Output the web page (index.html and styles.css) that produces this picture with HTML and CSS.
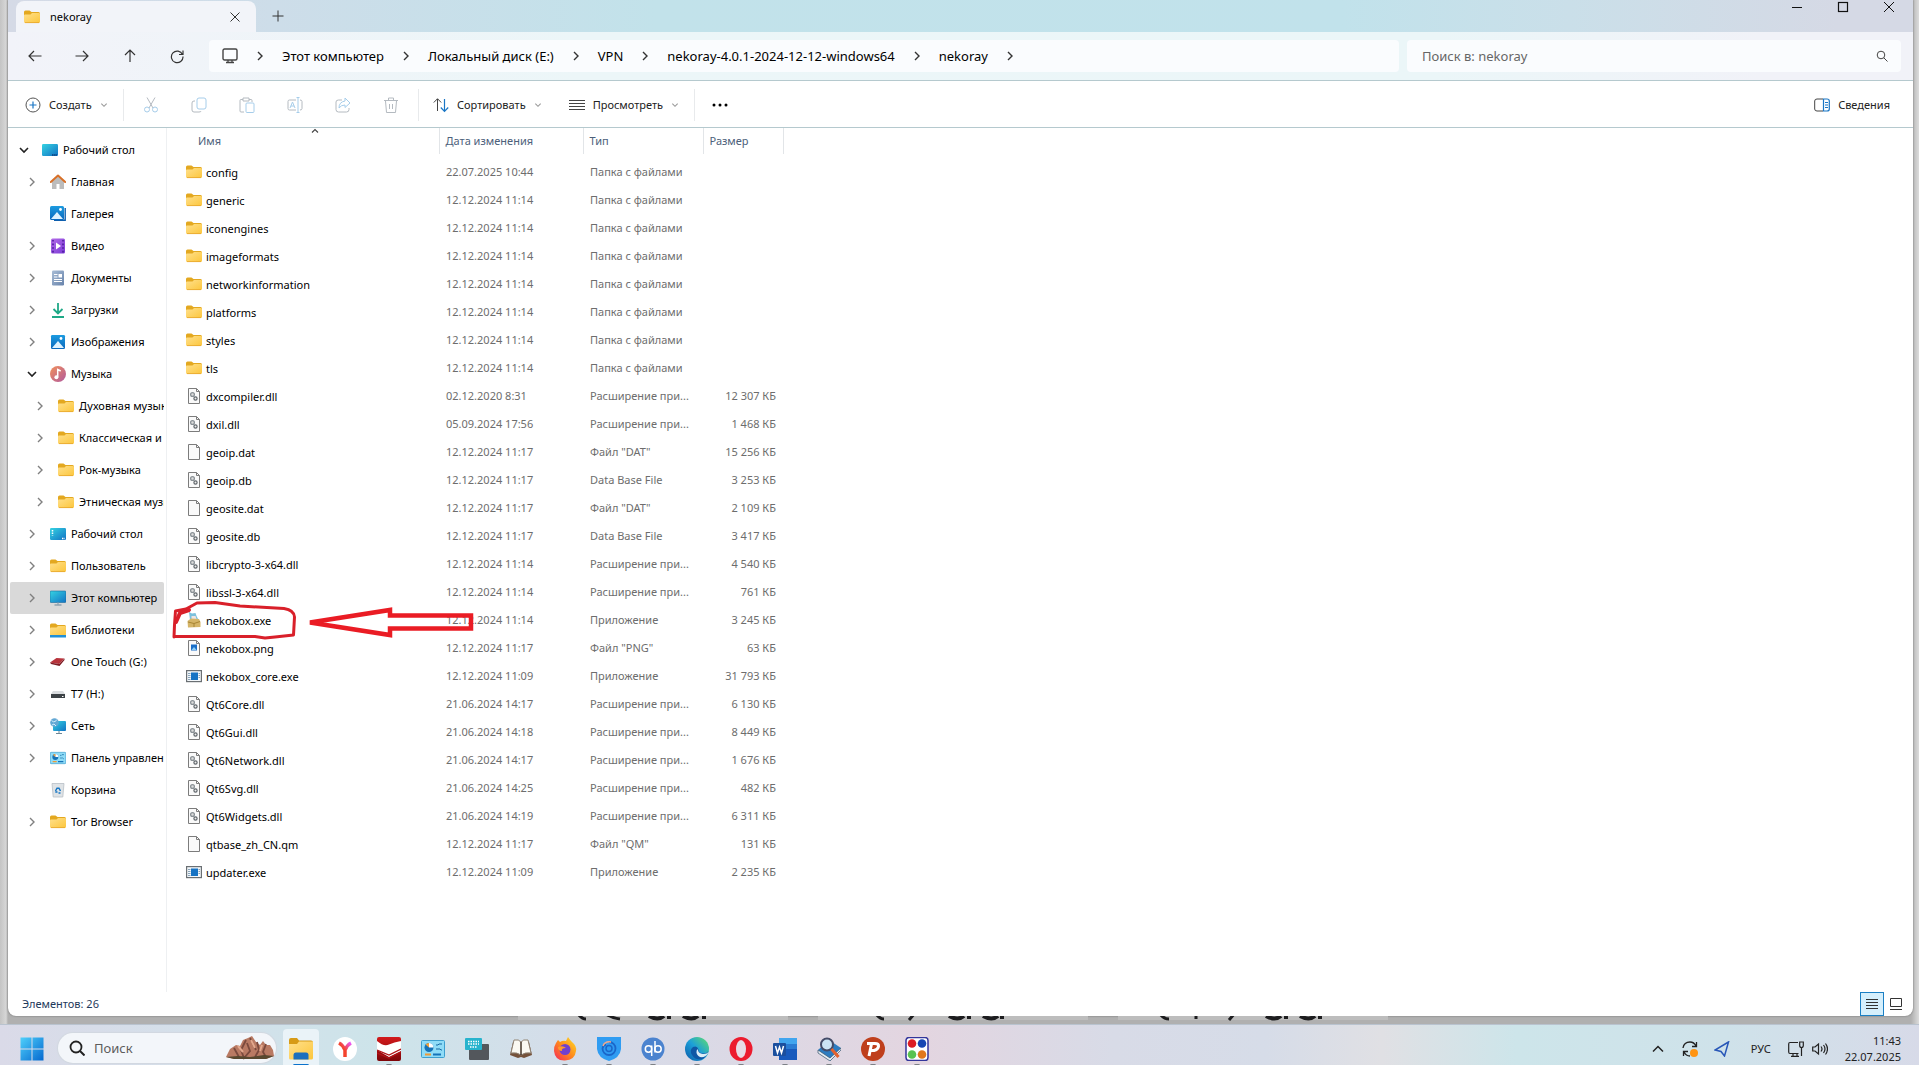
FILE: index.html
```html
<!DOCTYPE html>
<html lang="ru">
<head>
<meta charset="utf-8">
<title>nekoray</title>
<link rel="stylesheet" href="styles.css">
</head>
<body>
<svg class="sprite" aria-hidden="true">
  <defs>
    <linearGradient id="gFolder" x1="0" y1="0" x2="1" y2="1"><stop offset="0" stop-color="#ffe08c"/><stop offset="1" stop-color="#fcc63c"/></linearGradient>
    <linearGradient id="gDesk" x1="0" y1="0" x2="1" y2="1"><stop offset="0" stop-color="#35d3e2"/><stop offset="1" stop-color="#1273c4"/></linearGradient>
    <linearGradient id="gBlue" x1="0" y1="0" x2="0" y2="1"><stop offset="0" stop-color="#1c9be0"/><stop offset="1" stop-color="#0a68bd"/></linearGradient>
    <linearGradient id="gViolet" x1="0" y1="0" x2="1" y2="1"><stop offset="0" stop-color="#b36be8"/><stop offset="1" stop-color="#7a3ad6"/></linearGradient>
    <linearGradient id="gDoc" x1="0" y1="0" x2="1" y2="1"><stop offset="0" stop-color="#a9bdd6"/><stop offset="1" stop-color="#6783ab"/></linearGradient>
    <linearGradient id="gMusic" x1="0" y1="0" x2="1" y2="1"><stop offset="0" stop-color="#f2905a"/><stop offset="1" stop-color="#b15a9e"/></linearGradient>
    <linearGradient id="gWin" x1="0" y1="0" x2="1" y2="1"><stop offset="0" stop-color="#4fd0fb"/><stop offset="1" stop-color="#0568cf"/></linearGradient>
    <linearGradient id="gFox" x1="1" y1="0" x2="0" y2="1"><stop offset="0" stop-color="#ffe226"/><stop offset=".5" stop-color="#ff8a1c"/><stop offset="1" stop-color="#f5245c"/></linearGradient>
    <linearGradient id="gEdge" x1="0" y1="1" x2="1" y2="0"><stop offset="0" stop-color="#0b59a8"/><stop offset=".5" stop-color="#1c9fd8"/><stop offset="1" stop-color="#63e06a"/></linearGradient>
    <linearGradient id="gRed" x1="0" y1="0" x2="0" y2="1"><stop offset="0" stop-color="#d31a1c"/><stop offset="1" stop-color="#7d0509"/></linearGradient>
    <linearGradient id="gYa" x1="0" y1="1" x2="1" y2="0"><stop offset=".5" stop-color="#f4442e"/><stop offset="1" stop-color="#e95bff"/></linearGradient>
  </defs>
  <symbol id="folder" viewBox="0 0 16 16"><path d="M0 3q0-1.500 1.500-1.500h4l2 1.500h7Q16 3 16 4.500V8H0z" fill="#e3a820"/><path d="M0 6.500Q0 5.500 1 5.500h5.500L8 4h7q1 0 1 1v7.500q0 1.500-1.500 1.500h-13Q0 14 0 12.500z" fill="url(#gFolder)"/><path d="M1 13.600h14" stroke="#e6a52b" stroke-width=".8"/></symbol>
  <symbol id="desktop" viewBox="0 0 16 16"><rect y="2" width="16" height="12" rx="1.200" fill="url(#gDesk)"/><path d="M10 13h5" stroke="#0b3f7c" stroke-width="1.600" stroke-dasharray="1.500 .6"/></symbol>
  <symbol id="desktop2" viewBox="0 0 16 16"><rect y="2" width="16" height="12" rx="1.200" fill="url(#gDesk)"/><path d="M2.500 4v5.500M12 12.500h3" stroke="#fff" stroke-width="1.500" stroke-dasharray="1.500 1"/></symbol>
  <symbol id="home" viewBox="0 0 16 16"><path d="M2 7l6-5 6 5v8h-4.500v-5h-3v5H2z" fill="#bcbcbc"/><path d="M.8 8L8 1.500 15.200 8" fill="none" stroke="#d87028" stroke-width="2" stroke-linecap="round" stroke-linejoin="round"/></symbol>
  <symbol id="gallery" viewBox="0 0 16 16"><path d="M15.200 2v12.200H4" stroke="#0d5fae" stroke-width="1.400" fill="none"/><rect width="14" height="14" rx="1.500" fill="url(#gBlue)"/><path d="M1 13l6-7 6 7z" fill="#dff3ff"/><circle cx="10.500" cy="3.500" r="1.400" fill="#fff"/></symbol>
  <symbol id="video" viewBox="0 0 16 16"><rect x="1" y=".5" width="14" height="15" rx="1.500" fill="url(#gViolet)"/><path d="M3 2v13M13 2v13" stroke="#4b1c9c" stroke-width="1.600" stroke-dasharray="1.600 2"/><path d="M6 4.500l5 3.500-5 3.500z" fill="#fff"/></symbol>
  <symbol id="docs" viewBox="0 0 16 16"><rect x="2" y=".5" width="12" height="15" rx="1.200" fill="url(#gDoc)"/><path d="M4 4.500h3.500M4 7h3.500M4 9.500h8M4 11.500h8" stroke="#fff"/><rect x="8.500" y="4" width="3.500" height="3.500" fill="#fff"/></symbol>
  <symbol id="downloads" viewBox="0 0 16 16"><path d="M8 1v10M3.500 7L8 11.500 12.500 7M2 15h12" stroke="#1fa987" stroke-width="1.800" fill="none"/></symbol>
  <symbol id="pictures" viewBox="0 0 16 16"><rect x="1" y="1" width="14" height="14" rx="1.200" fill="url(#gBlue)"/><path d="M2 14l6-7 6 7z" fill="#dff3ff"/><circle cx="11" cy="4.500" r="1.400" fill="#fff"/></symbol>
  <symbol id="music" viewBox="0 0 16 16"><circle cx="8" cy="8" r="8" fill="url(#gMusic)"/><path d="M7.700 11V3.500l3 1.500" stroke="#fff" stroke-width="1.500" fill="none"/><circle cx="6.400" cy="11.200" r="2" fill="#fff"/></symbol>
  <symbol id="pc" viewBox="0 0 16 16"><rect y="1" width="16" height="11.500" rx="1" fill="url(#gDesk)" stroke="#1b6a9c" stroke-width=".6"/><path d="M8 12.500v2M4.500 15h7" stroke="#8fa3b0" stroke-width="1.300"/></symbol>
  <symbol id="libs" viewBox="0 0 16 16"><use href="#folder"/><rect y="13" width="16" height="2.500" fill="#2090d8"/></symbol>
  <symbol id="onetouch" viewBox="0 0 16 16"><path d="M0 8.500L6.500 4l8 .5L9 10z" fill="#b8343c"/><path d="M0 8.500L9 10l5.500-5.500v1.500L9.500 12 1 10z" fill="#7d1c24"/></symbol>
  <symbol id="t7" viewBox="0 0 16 16"><path d="M3 5h10l2 3H1z" fill="#d9dcdf"/><rect x="1" y="8" width="14" height="4" fill="#3c4246"/><path d="M12 10.500h1.500" stroke="#fff"/></symbol>
  <symbol id="net" viewBox="0 0 16 16"><rect x="3" y="3" width="13" height="10" rx="1" fill="url(#gDesk)"/><path d="M9 13v2.500M6 15.500h6" stroke="#6c8796"/><circle cx="4.500" cy="4.500" r="4.300" fill="#64a8d4"/><path d="M1.500 2.500q2 2 3.500 1t2-2M2 7l2-1 2 2" stroke="#d3eefb" fill="none"/></symbol>
  <symbol id="control" viewBox="0 0 24 18"><rect x=".5" y=".5" width="23" height="17" rx="1" fill="#8fdcf7" stroke="#3d9fcf"/><circle cx="8" cy="7.500" r="4.500" fill="#1573b8"/><path d="M8 7.500V3a4.500 4.500 0 0 1 4.500 4.500z" fill="#fff"/><path d="M8 7.500L4.500 4.600A4.500 4.500 0 0 1 8 3z" fill="#f2a23a"/><path d="M15 5h2l1-1h3M15 9h4l1 1h1" stroke="#146aa5" fill="none"/><path d="M4 14.500h6" stroke="#ee9b36" stroke-width="2"/><path d="M12 14.500h8" stroke="#1573b8" stroke-width="2"/></symbol>
  <symbol id="bin" viewBox="0 0 16 16"><path d="M2 1.500h12L12.800 15H3.200z" fill="#dfe3e6" stroke="#b8bfc5" stroke-width=".8"/><path d="M5.500 9L7 6.200h2L10.500 9M5.300 10h2.200M8.500 11h2" stroke="#1877c4" stroke-width="1.500" fill="none"/></symbol>
  <symbol id="page" viewBox="0 0 16 16"><path d="M2.500.5h8l3 3v12h-11z" fill="#fafafa" stroke="#7c7c7c"/><path d="M10.500.5v3h3" fill="none" stroke="#7c7c7c"/></symbol>
  <symbol id="gear" viewBox="0 0 16 16"><use href="#page"/><circle cx="6.500" cy="6.500" r="1.900" fill="#ddd" stroke="#8a9196" stroke-width="1.300"/><circle cx="9.500" cy="10.500" r="1.600" fill="#eee" stroke="#60666b" stroke-width="1.200"/></symbol>
  <symbol id="png" viewBox="0 0 16 16"><use href="#page"/><rect x="5" y="4.500" width="6" height="6" fill="#1b6fc8"/><path d="M5.500 10l2.500-3 2.500 3z" fill="#8fd0f7"/></symbol>
  <symbol id="exe" viewBox="0 0 16 16"><rect x=".6" y="2.600" width="14.800" height="11" fill="#f4f8fb" stroke="#6a6f73" stroke-width="1.200"/><path d="M2 5.500h2.500M2 7.500h2.500M2 9.500h2.500M2 11.500h2.500M12.500 5.500H14M12.500 7.500H14M12.500 9.500H14" stroke="#8aa5bb"/><rect x="5" y="4.500" width="7" height="7.500" fill="#1673c4"/></symbol>
  <symbol id="neko" viewBox="0 0 16 16"><path d="M3 0l3 1.500 3.500-.5 1 3 2 4H4z" fill="#7cc0dc"/><path d="M5.500 4h4l1 3H5.500z" fill="#f0e5e0"/><path d="M1.500 9L5 6.500l8 .5 1.500 3v5L2 15.500z" fill="#d5b568"/><path d="M2 10l6 1.500 6-2M8 11.500V15" stroke="#a88534" fill="none"/></symbol>
  <symbol id="right" viewBox="0 0 8 12"><path d="M2 2l4 4-4 4" fill="none" stroke="currentColor" stroke-width="1.400"/></symbol>
  <symbol id="down" viewBox="0 0 12 8"><path d="M2 2l4 4 4-4" fill="none" stroke="currentColor" stroke-width="1.600"/></symbol>
</svg>

<main class="window">
  <header class="titlebar">
    <div class="tab"><svg class="i16"><use href="#folder"/></svg><span class="tab-name">nekoray</span><button class="plain" aria-label="Закрыть вкладку"><svg class="i12" viewBox="0 0 12 12"><path d="M1.500 1.500l9 9M10.500 1.500l-9 9" stroke="#333"/></svg></button></div>
    <button class="plain newtab" aria-label="Новая вкладка"><svg class="i12" viewBox="0 0 12 12"><path d="M6 .5v11M.5 6h11" stroke="#333"/></svg></button>
    <div class="winbuttons">
      <button class="plain" aria-label="Свернуть"><svg class="i12" viewBox="0 0 12 12"><path d="M1 6.500h10" stroke="#111"/></svg></button>
      <button class="plain" aria-label="Развернуть"><svg class="i12" viewBox="0 0 12 12"><rect x="1.500" y="1.500" width="9" height="9" fill="none" stroke="#111" stroke-width="1.200"/></svg></button>
      <button class="plain" aria-label="Закрыть"><svg class="i12" viewBox="0 0 12 12"><path d="M1 1l10 10M11 1L1 11" stroke="#111"/></svg></button>
    </div>
  </header>

  <div class="navbar">
    <div class="navbuttons">
      <button class="plain" aria-label="Назад"><svg class="i16" viewBox="0 0 16 16"><path d="M14.500 8H2M7 3L2 8l5 5"/></svg></button>
      <button class="plain" aria-label="Вперёд"><svg class="i16" viewBox="0 0 16 16"><path d="M1.500 8H14M9 3l5 5-5 5"/></svg></button>
      <button class="plain" aria-label="Вверх"><svg class="i16" viewBox="0 0 16 16"><path d="M8 14V2M3 7l5-5 5 5"/></svg></button>
      <button class="plain" aria-label="Обновить"><svg class="i16" viewBox="0 0 16 16"><path d="M13.500 6.500A5.800 5.800 0 1 0 14 8.500M14 2.500v4h-4"/></svg></button>
    </div>
    <nav class="address" aria-label="Путь">
      <svg class="i16" viewBox="0 0 16 16"><rect x="1" y="1" width="14" height="11" rx="1.500" fill="none" stroke="#444" stroke-width="1.400"/><path d="M4 14.500h8M6 12v2M10 12v2" stroke="#444" stroke-width="1.300"/></svg>
      <svg class="crumb"><use href="#right"/></svg><a href="#">Этот компьютер</a>
      <svg class="crumb"><use href="#right"/></svg><a href="#">Локальный диск (E:)</a>
      <svg class="crumb"><use href="#right"/></svg><a href="#">VPN</a>
      <svg class="crumb"><use href="#right"/></svg><a href="#">nekoray-4.0.1-2024-12-12-windows64</a>
      <svg class="crumb"><use href="#right"/></svg><a href="#">nekoray</a>
      <svg class="crumb"><use href="#right"/></svg>
    </nav>
    <div class="search"><input type="text" aria-label="Поиск" placeholder="Поиск в: nekoray"><svg class="i12" viewBox="0 0 12 12"><circle cx="5" cy="5" r="3.800" fill="none" stroke="#444"/><path d="M7.800 7.800l3.700 3.700" stroke="#444"/></svg></div>
  </div>

  <div class="toolbar">
    <button class="tool new"><svg class="i16" viewBox="0 0 16 16"><circle cx="8" cy="8" r="7" fill="none" stroke="#555"/><path d="M8 4.500v7M4.500 8h7" stroke="#1976c5" stroke-width="1.200"/></svg>Создать<svg class="drop"><use href="#down"/></svg></button>
    <div class="tools">
      <button class="plain" aria-label="Вырезать" disabled><svg class="i16" viewBox="0 0 16 16"><path d="M4 .5l6 10.500M12 .5L6 11" stroke="#b4bac0"/><circle cx="4" cy="12.500" r="2.500"/><circle cx="12" cy="12.500" r="2.500"/></svg></button>
      <button class="plain" aria-label="Копировать" disabled><svg class="i16" viewBox="0 0 16 16"><rect x="6" y="1" width="9" height="11" rx="2"/><path d="M4 4H3q-2 0-2 2v7q0 2 2 2h5q2 0 2-1" stroke="#b4bac0"/></svg></button>
      <button class="plain" aria-label="Вставить" disabled><svg class="i16" viewBox="0 0 16 16"><path d="M5 15H2q-1 0-1-1V3.500q0-1 1-1h2M10 2.500h2q1 0 1 1V5M4 1h6v3H4z" stroke="#b4bac0"/><rect x="7" y="6" width="8" height="9.500" rx="1"/></svg></button>
      <button class="plain" aria-label="Переименовать" disabled><svg class="i16" viewBox="0 0 16 16"><path d="M9 3H2.500Q1 3 1 4.500v7Q1 13 2.500 13H9M13 3q2 0 2 1.500v7q0 1.500-2 1.500" stroke="#b4bac0"/><path d="M3 11l2.500-6L8 11M4 9h3M11 .5v15M9.500.5h3M9.500 15.500h3"/></svg></button>
      <button class="plain" aria-label="Поделиться" disabled><svg class="i16" viewBox="0 0 16 16"><path d="M7 3H3.500Q1 3 1 5v7.500Q1 15 3.500 15h8q2.500 0 2.500-2.500V11" stroke="#b4bac0"/><path d="M10 1l5 5-5 4.500V8Q6 8 4 11q0-6 6-7z"/></svg></button>
      <button class="plain" aria-label="Удалить" disabled><svg class="i16" viewBox="0 0 16 16"><path d="M1 3.500h14M5.500 3V1h5v2M2.500 4l1 11.500h9l1-11.500M6.500 7v5M9.500 7v5" stroke="#b4bac0"/></svg></button>
    </div>
    <button class="tool"><svg class="i16" viewBox="0 0 16 16"><path d="M4.500 14V2M.8 5.500l3.700-3.800 3.700 3.800" stroke="#444" fill="none"/><path d="M11.500 2v12M7.800 10.500l3.700 3.800 3.700-3.800" stroke="#1976c5" stroke-width="1.200" fill="none"/></svg>Сортировать<svg class="drop"><use href="#down"/></svg></button>
    <button class="tool view"><svg class="i16" viewBox="0 0 16 16"><path d="M0 3.500h16M0 6.500h16M0 9.500h16M0 12.500h16" stroke="#444"/></svg>Просмотреть<svg class="drop"><use href="#down"/></svg></button>
    <button class="plain more" aria-label="Ещё"><svg class="i16" viewBox="0 0 16 16"><circle cx="2" cy="8" r="1.500"/><circle cx="8" cy="8" r="1.500"/><circle cx="14" cy="8" r="1.500"/></svg></button>
    <button class="tool details"><svg class="i16" viewBox="0 0 16 16"><path d="M9 2H3Q.7 2 .7 4v8q0 2 2.300 2h6" fill="none" stroke="#444"/><path d="M9.500 2H13q2.300 0 2.300 2v8q0 2-2.300 2H9.500zM11 5.500h3M11 8h3M11 10.500h3" fill="none" stroke="#1976c5" stroke-width="1.200"/></svg>Сведения</button>
  </div>

  <div class="content">
    <nav class="tree" aria-label="Папки">
      <a class="open" href="#"><svg class="chev"><use href="#down"/></svg><svg class="i16"><use href="#desktop"/></svg>Рабочий стол</a>
      <a class="l1" href="#"><svg class="chev"><use href="#right"/></svg><svg class="i16"><use href="#home"/></svg>Главная</a>
      <a class="l1" href="#"><span class="chev"></span><svg class="i16"><use href="#gallery"/></svg>Галерея</a>
      <a class="l1" href="#"><svg class="chev"><use href="#right"/></svg><svg class="i16"><use href="#video"/></svg>Видео</a>
      <a class="l1" href="#"><svg class="chev"><use href="#right"/></svg><svg class="i16"><use href="#docs"/></svg>Документы</a>
      <a class="l1" href="#"><svg class="chev"><use href="#right"/></svg><svg class="i16"><use href="#downloads"/></svg>Загрузки</a>
      <a class="l1" href="#"><svg class="chev"><use href="#right"/></svg><svg class="i16"><use href="#pictures"/></svg>Изображения</a>
      <a class="l1 open" href="#"><svg class="chev"><use href="#down"/></svg><svg class="i16"><use href="#music"/></svg>Музыка</a>
      <a class="l2" href="#"><svg class="chev"><use href="#right"/></svg><svg class="i16"><use href="#folder"/></svg>Духовная музыка</a>
      <a class="l2" href="#"><svg class="chev"><use href="#right"/></svg><svg class="i16"><use href="#folder"/></svg>Классическая и</a>
      <a class="l2" href="#"><svg class="chev"><use href="#right"/></svg><svg class="i16"><use href="#folder"/></svg>Рок-музыка</a>
      <a class="l2" href="#"><svg class="chev"><use href="#right"/></svg><svg class="i16"><use href="#folder"/></svg>Этническая музыка</a>
      <a class="l1" href="#"><svg class="chev"><use href="#right"/></svg><svg class="i16"><use href="#desktop2"/></svg>Рабочий стол</a>
      <a class="l1" href="#"><svg class="chev"><use href="#right"/></svg><svg class="i16"><use href="#folder"/></svg>Пользователь</a>
      <a class="l1 selected" href="#"><svg class="chev"><use href="#right"/></svg><svg class="i16"><use href="#pc"/></svg>Этот компьютер</a>
      <a class="l1" href="#"><svg class="chev"><use href="#right"/></svg><svg class="i16"><use href="#libs"/></svg>Библиотеки</a>
      <a class="l1" href="#"><svg class="chev"><use href="#right"/></svg><svg class="i16"><use href="#onetouch"/></svg>One Touch (G:)</a>
      <a class="l1" href="#"><svg class="chev"><use href="#right"/></svg><svg class="i16"><use href="#t7"/></svg>T7 (H:)</a>
      <a class="l1" href="#"><svg class="chev"><use href="#right"/></svg><svg class="i16"><use href="#net"/></svg>Сеть</a>
      <a class="l1" href="#"><svg class="chev"><use href="#right"/></svg><svg class="i16"><use href="#control"/></svg>Панель управления</a>
      <a class="l1" href="#"><span class="chev"></span><svg class="i16"><use href="#bin"/></svg>Корзина</a>
      <a class="l1" href="#"><svg class="chev"><use href="#right"/></svg><svg class="i16"><use href="#folder"/></svg>Tor Browser</a>
    </nav>
    <section class="files">
      <table>
        <colgroup><col class="c-name"><col class="c-date"><col class="c-type"><col class="c-size"></colgroup>
        <thead><tr><th>Имя<svg class="sort" viewBox="0 0 12 8"><path d="M2 6l4-4 4 4" fill="none" stroke="#444" stroke-width="1.500"/></svg></th><th>Дата изменения</th><th>Тип</th><th>Размер</th></tr></thead>
        <tbody>
          <tr><td><svg class="i16"><use href="#folder"/></svg>config</td><td>22.07.2025 10:44</td><td>Папка с файлами</td><td></td></tr>
          <tr><td><svg class="i16"><use href="#folder"/></svg>generic</td><td>12.12.2024 11:14</td><td>Папка с файлами</td><td></td></tr>
          <tr><td><svg class="i16"><use href="#folder"/></svg>iconengines</td><td>12.12.2024 11:14</td><td>Папка с файлами</td><td></td></tr>
          <tr><td><svg class="i16"><use href="#folder"/></svg>imageformats</td><td>12.12.2024 11:14</td><td>Папка с файлами</td><td></td></tr>
          <tr><td><svg class="i16"><use href="#folder"/></svg>networkinformation</td><td>12.12.2024 11:14</td><td>Папка с файлами</td><td></td></tr>
          <tr><td><svg class="i16"><use href="#folder"/></svg>platforms</td><td>12.12.2024 11:14</td><td>Папка с файлами</td><td></td></tr>
          <tr><td><svg class="i16"><use href="#folder"/></svg>styles</td><td>12.12.2024 11:14</td><td>Папка с файлами</td><td></td></tr>
          <tr><td><svg class="i16"><use href="#folder"/></svg>tls</td><td>12.12.2024 11:14</td><td>Папка с файлами</td><td></td></tr>
          <tr><td><svg class="i16"><use href="#gear"/></svg>dxcompiler.dll</td><td>02.12.2020 8:31</td><td>Расширение при...</td><td>12 307 КБ</td></tr>
          <tr><td><svg class="i16"><use href="#gear"/></svg>dxil.dll</td><td>05.09.2024 17:56</td><td>Расширение при...</td><td>1 468 КБ</td></tr>
          <tr><td><svg class="i16"><use href="#page"/></svg>geoip.dat</td><td>12.12.2024 11:17</td><td>Файл "DAT"</td><td>15 256 КБ</td></tr>
          <tr><td><svg class="i16"><use href="#gear"/></svg>geoip.db</td><td>12.12.2024 11:17</td><td>Data Base File</td><td>3 253 КБ</td></tr>
          <tr><td><svg class="i16"><use href="#page"/></svg>geosite.dat</td><td>12.12.2024 11:17</td><td>Файл "DAT"</td><td>2 109 КБ</td></tr>
          <tr><td><svg class="i16"><use href="#gear"/></svg>geosite.db</td><td>12.12.2024 11:17</td><td>Data Base File</td><td>3 417 КБ</td></tr>
          <tr><td><svg class="i16"><use href="#gear"/></svg>libcrypto-3-x64.dll</td><td>12.12.2024 11:14</td><td>Расширение при...</td><td>4 540 КБ</td></tr>
          <tr><td><svg class="i16"><use href="#gear"/></svg>libssl-3-x64.dll</td><td>12.12.2024 11:14</td><td>Расширение при...</td><td>761 КБ</td></tr>
          <tr><td><svg class="i16"><use href="#neko"/></svg>nekobox.exe</td><td>12.12.2024 11:14</td><td>Приложение</td><td>3 245 КБ</td></tr>
          <tr><td><svg class="i16"><use href="#png"/></svg>nekobox.png</td><td>12.12.2024 11:17</td><td>Файл "PNG"</td><td>63 КБ</td></tr>
          <tr><td><svg class="i16"><use href="#exe"/></svg>nekobox_core.exe</td><td>12.12.2024 11:09</td><td>Приложение</td><td>31 793 КБ</td></tr>
          <tr><td><svg class="i16"><use href="#gear"/></svg>Qt6Core.dll</td><td>21.06.2024 14:17</td><td>Расширение при...</td><td>6 130 КБ</td></tr>
          <tr><td><svg class="i16"><use href="#gear"/></svg>Qt6Gui.dll</td><td>21.06.2024 14:18</td><td>Расширение при...</td><td>8 449 КБ</td></tr>
          <tr><td><svg class="i16"><use href="#gear"/></svg>Qt6Network.dll</td><td>21.06.2024 14:17</td><td>Расширение при...</td><td>1 676 КБ</td></tr>
          <tr><td><svg class="i16"><use href="#gear"/></svg>Qt6Svg.dll</td><td>21.06.2024 14:25</td><td>Расширение при...</td><td>482 КБ</td></tr>
          <tr><td><svg class="i16"><use href="#gear"/></svg>Qt6Widgets.dll</td><td>21.06.2024 14:19</td><td>Расширение при...</td><td>6 311 КБ</td></tr>
          <tr><td><svg class="i16"><use href="#page"/></svg>qtbase_zh_CN.qm</td><td>12.12.2024 11:17</td><td>Файл "QM"</td><td>131 КБ</td></tr>
          <tr><td><svg class="i16"><use href="#exe"/></svg>updater.exe</td><td>12.12.2024 11:09</td><td>Приложение</td><td>2 235 КБ</td></tr>
        </tbody>
      </table>
      <svg class="marker" viewBox="172 598 304 44" aria-hidden="true">
        <g fill="none" stroke="#d9202a" stroke-width="3" stroke-linejoin="round" stroke-linecap="round"><path d="M174 637L174.500 625 175.500 611 186 609 197 603 215 602.500 240 606 284 608.500Q294 610 294.500 617L293.500 635 275 637 265 638 255 636.500H174"/><path d="M176 622l4-9 9-3" stroke-width="4"/></g>
        <path d="M310 622.500L390 610v5.500h81v13h-81v6.500z" fill="none" stroke="#ea1c24" stroke-width="4.500"/>
      </svg>
    </section>
  </div>

  <footer class="status">
    <span>Элементов: 26</span>
    <div class="modes">
      <button class="plain on" aria-label="Таблица"><svg class="i12" viewBox="0 0 12 12"><path d="M0 1.500h12M0 4.500h12M0 7.500h12M0 10.500h12" stroke="#333"/></svg></button>
      <button class="plain" aria-label="Эскизы"><svg class="i12" viewBox="0 0 12 12"><path d="M.5.500h11v8H.500zM0 11.500h12" fill="none" stroke="#333"/></svg></button>
    </div>
  </footer>
</main>

<div class="behind" aria-hidden="true">
  <svg viewBox="0 0 900 8" width="900" height="8"><path d="M0 0h270v4H0zM300 0h270v4H300zM600 0h270v4H600z" fill="#bdbdbd"/><g fill="none" stroke="#1d1d1f" stroke-width="3"><path d="M60-2q4 5 8 5M88-2q6 4 14 5"/><path d="M131 0q9 5 15 0M151-2v5M165 0q9 5 15 0M186-2v5" stroke-width="4"/></g><g fill="none" stroke="#1d1d1f"><path d="M358-2q4 5 8 5M397-3l-6 7" stroke-width="3"/><path d="M431 0q9 5 15 0M451-2v5M465 0q9 5 15 0M484-2v5" stroke-width="4"/><path d="M642-2q4 5 9 5M678-2v5M717-3l-6 7" stroke-width="3"/><path d="M748 0q9 5 15 0M768-2v5M782 0q9 5 15 0M802-2v5" stroke-width="4"/></g></svg>
</div>

<footer class="taskbar">
  <button class="plain start" aria-label="Пуск"><svg class="i24" viewBox="0 0 24 24"><path d="M.5.500h11v11H.500zM12.500.500h11v11h-11zM.5 12.500h11v11H.500zM12.500 12.500h11v11h-11z" fill="url(#gWin)"/></svg></button>
  <div class="tasksearch"><svg class="i16" viewBox="0 0 16 16"><circle cx="7" cy="7" r="5.500" fill="none" stroke="#222" stroke-width="1.800"/><path d="M11 11l4.500 4.500" stroke="#222" stroke-width="2"/></svg><input type="text" aria-label="Поиск в системе" placeholder="Поиск">
    <svg class="rocks" viewBox="0 0 48 24"><path d="M0 21l4-8 6-4 4 1 3-6 5-2 4-2 4 6 4 3 3-4 3 4 4 0 3 5 1 6-8 3H8z" fill="#b97a63"/><path d="M8 12l5 9M20 4l-5 10 3 8 6-7-3-8M31 6l2 8-4 7M40 8l-3 8 3 5M24 2l6 12" stroke="#7b4a3d" stroke-width="1.800" fill="none"/><path d="M12 10l5 6M25 4l4 8M36 9l-2 6" stroke="#e3a88d" stroke-width="2"/><path d="M0 21l12-1 12 1 14-2 10 1-8 3H8z" fill="#58482f"/></svg></div>
  <div class="apps">
    <button class="plain app active" aria-label="Проводник"><svg class="i24" viewBox="0 0 24 24"><path d="M0 3q0-2 2-2h6l2 2.500h12q2 0 2 2V12H0z" fill="#d79b17"/><path d="M0 7h8l2-2.500h14V21q0 1.500-1.500 1.500h-21Q0 22.500 0 21z" fill="url(#gFolder)"/><path d="M4.500 22.500V18q0-2.500 2.500-2.500h10q2.500 0 2.500 2.500v4.500z" fill="#1b6fbd"/></svg></button>
    <button class="plain app" aria-label="Яндекс"><svg class="i24" viewBox="0 0 24 24"><circle cx="12" cy="12" r="12" fill="#fff"/><path d="M6 6q4 2 6 7v7M18 6q-4 2-6 7" fill="none" stroke="url(#gYa)" stroke-width="3.500"/></svg></button>
    <button class="plain app run" aria-label="Читалка"><svg class="i24" viewBox="0 0 24 24"><rect width="24" height="24" rx="2" fill="url(#gRed)"/><path d="M0 4q7 6 12 3.500T24 4v10l-12 6L0 13z" fill="#fff"/><path d="M0 13l12 5 12-6M0 16l12 5 12-6" stroke="#b01216" stroke-width="1.300" fill="none"/></svg></button>
    <button class="plain app" aria-label="Панель управления"><svg class="i24"><use href="#control"/></svg></button>
    <button class="plain app" aria-label="Клавиатура"><svg class="i24" viewBox="0 0 24 24"><rect x="4" y="7" width="20" height="16" rx="1" fill="#53575c"/><rect y="1" width="17" height="12" rx="1" fill="#27b3cd"/><path d="M3 4.500h11M3 7h11M5 10h7" stroke="#fff" stroke-width="1.300" stroke-dasharray="1.500 1"/></svg></button>
    <button class="plain app" aria-label="Книга"><svg class="i24" viewBox="0 0 24 24"><path d="M1 18L4 5l8 1 8-1 3 13-8 3-3-1-3 1z" fill="#75523a"/><path d="M2 16L5 3q5-1 7 2 2-3 7-2l3 13q-6-1-10 2-4-3-10-2z" fill="#fbf9f2" stroke="#8f8273"/><path d="M12 5v13" stroke="#443429" stroke-width="1.500"/></svg></button>
    <button class="plain app run" aria-label="Firefox"><svg class="i24" viewBox="0 0 24 24"><path d="M3 6l2-3 2 2q3-2 6-1l2-4q2 3 4 5 5 4 4 9-1 9-11 9.500T1 14q-.5-4 2-8z" fill="url(#gFox)"/><circle cx="12" cy="12.500" r="5.500" fill="#7040cf"/><path d="M5 10q5-2 8 1-5 0-4 3-4 0-4-4z" fill="#ff982e"/></svg></button>
    <button class="plain app run" aria-label="Защита"><svg class="i24" viewBox="0 0 24 24"><path d="M0 0h24v12q-1 9-12 12Q1 21 0 12z" fill="#2f9cf2"/><path d="M12 5a6.500 6.500 0 1 1-6.500 6.500Q6 8 9 7.500" fill="none" stroke="#1a66c9" stroke-width="1.800"/><path d="M6 9q2-5 8-4" stroke="#f1a98d" stroke-width="1.500" fill="none"/><circle cx="12" cy="11.500" r="3" fill="none" stroke="#1a66c9" stroke-width="1.500"/></svg></button>
    <button class="plain app run" aria-label="qBittorrent"><svg class="i24" viewBox="0 0 24 24"><circle cx="12" cy="12" r="11.500" fill="#4b83cf"/><circle cx="7.500" cy="12" r="3.200" fill="none" stroke="#fff" stroke-width="1.500"/><path d="M10.700 8.500V19M14 4v11.500" stroke="#fff" stroke-width="1.500"/><circle cx="17" cy="12" r="3.200" fill="none" stroke="#fff" stroke-width="1.500"/></svg></button>
    <button class="plain app run" aria-label="Edge"><svg class="i24" viewBox="0 0 24 24"><circle cx="12" cy="12" r="12" fill="url(#gEdge)"/><path d="M23.500 14q-2 3-6 2.500-4-1-4-4Q12 8 8 10q-4 3-1 8t9 4.500q5-1.500 7.500-8.500z" fill="#1057a5"/><path d="M23.500 15q-2 2.500-6 2-5-1-4.500-5-2 1-1.500 4 1.500 5 7 4 3.500-1 5-5z" fill="#dceef7"/></svg></button>
    <button class="plain app run" aria-label="Opera"><svg class="i24" viewBox="0 0 24 24"><ellipse cx="12" cy="12" rx="11.500" ry="12" fill="#ec1b2e"/><ellipse cx="12" cy="12" rx="5" ry="9" fill="#e7dbe5"/></svg></button>
    <button class="plain app run" aria-label="Word"><svg class="i24" viewBox="0 0 24 24"><path d="M6 1h18v22H6z" fill="#2b7cd3"/><path d="M6 1h18v6H6z" fill="#41a5ee"/><path d="M6 12h18v11H6z" fill="#185abd"/><rect y="6" width="13" height="13" rx="1" fill="#1b4f9e"/><path d="M2.500 9l2 7 2-6 2 6 2-7" stroke="#fff" stroke-width="1.500" fill="none"/></svg></button>
    <button class="plain app run" aria-label="Поиск файлов"><svg class="i24" viewBox="0 0 24 24"><path d="M1 13L12 3l12 8-11 13z" fill="#2d7cc0"/><path d="M1 13v3l12 8 11-11v-2L13 21z" fill="#e4ecf2" stroke="#33516a" stroke-width=".7"/><circle cx="10" cy="7.500" r="6" fill="#cbe4f5" stroke="#444c68" stroke-width="2"/><path d="M14.500 12l7 8" stroke="#e4622e" stroke-width="3"/></svg></button>
    <button class="plain app run" aria-label="Psiphon"><svg class="i24" viewBox="0 0 24 24"><circle cx="12" cy="12" r="12" fill="#bf3f1c"/><path d="M6 6.500h8q4 0 3.500 3T13 13.500H9.500M10.500 7L8 19" stroke="#fff" stroke-width="3" fill="none"/></svg></button>
    <button class="plain app run" aria-label="Точки"><svg class="i24" viewBox="0 0 24 24"><rect x="1" y=".5" width="22" height="23" rx="3" fill="#fff" stroke="#33359b" stroke-width="1.500"/><circle cx="7" cy="6.500" r="4.300" fill="#dc1c25"/><circle cx="17" cy="6.500" r="4.300" fill="#1746b3"/><circle cx="7" cy="17.500" r="4.300" fill="#58c250"/><circle cx="17" cy="17.500" r="4.300" fill="#e1771c"/></svg></button>
  </div>
  <div class="tray">
    <button class="plain" aria-label="Скрытые значки"><svg class="i16" viewBox="0 0 16 16"><path d="M3 10.500l5-5 5 5" fill="none" stroke="#222" stroke-width="1.500"/></svg></button>
    <button class="plain" aria-label="Обновления"><svg class="i16" viewBox="0 0 16 16"><path d="M1 7q1-6 7-6 4 0 6 4M14.500 1v4.500H10M1.500 15v-4.500H6M2 11q2 4 6 4" fill="none" stroke="#222" stroke-width="1.300"/><circle cx="12" cy="12" r="4" fill="#ff9412"/></svg></button>
    <button class="plain" aria-label="Расположение"><svg class="i16" viewBox="0 0 16 16"><path d="M14.500 1L1 9l6 1.500L10.500 15z" fill="none" stroke="#2857b8" stroke-width="1.500"/></svg></button>
    <button class="plain lang">РУС</button>
    <button class="plain" aria-label="Сеть"><svg class="i16" viewBox="0 0 16 16"><path d="M10 1.500H2Q.7 1.500.7 3v8q0 1.500 1.300 1.500h8.500M5 13v2M9 13v2M3 15.300h8M13.500 7v8M11.700 1h3.600v3.500q0 2-1.800 2t-1.800-2z" fill="none" stroke="#222" stroke-width="1.200"/></svg></button>
    <button class="plain" aria-label="Громкость"><svg class="i16" viewBox="0 0 16 16"><path d="M.7 6H3l3.500-3v10L3 10H.7zM9 5.500q2 2.500 0 5M11.500 4q3 4 0 8M13.500 2.500q4 5.500 0 11" fill="none" stroke="#222" stroke-width="1.200"/></svg></button>
    <button class="plain clock"><time>11:43</time><time>22.07.2025</time></button>
  </div>
</footer>
</body>
</html>
```
FILE: styles.css
```css
* { box-sizing: border-box; }

body {
  margin: 0;
  height: 100vh;
  overflow: hidden;
  display: flex;
  flex-direction: column;
  background: linear-gradient(90deg, #c4c4c4, #d6d6d6 6px, #b0b0b0 8px, #b0b0b0 calc(100% - 8px), #dcdcdc);
  font: 11px/16px "Noto Sans", "Open Sans", sans-serif;
  color: #000;
  white-space: nowrap;
}

a { color: inherit; text-decoration: none; }
button, input { font: inherit; color: inherit; }
svg { flex: none; display: block; }
.sprite { position: absolute; width: 0; height: 0; }
.i12 { width: 12px; height: 12px; }
.i16 { width: 16px; height: 16px; }
.i24 { width: 24px; height: 24px; }
.plain {
  border: 0;
  padding: 0;
  background: none;
  display: flex;
  align-items: center;
  justify-content: center;
}

.window {
  flex: 1;
  min-height: 0;
  margin: 0 6px 0 8px;
  display: flex;
  flex-direction: column;
  background: #fff;
  border-radius: 0 0 8px 8px;
  box-shadow: 0 0 2px #666;
  overflow: hidden;
}

/* Title bar */
.titlebar {
  height: 32px;
  display: flex;
  padding-left: 8px;
  background: linear-gradient(90deg, #d5dae6, #cddde9 14%, #c2e2ea 34%, #c1e2eb 70%, #cadfe9 82%, #d5d9e5 96%);
}
.tab {
  width: 240px;
  margin-top: 1px;
  padding: 0 15px 0 8px;
  display: flex;
  align-items: center;
  gap: 10px;
  background: #f2f4f9;
  border-radius: 8px 8px 0 0;
}
.tab-name { flex: 1; }
.newtab { width: 44px; }
.winbuttons { margin-left: auto; height: 14px; display: flex; padding-right: 1px; }
.winbuttons .plain { width: 46px; }

/* Navigation */
.navbar {
  height: 49px;
  display: flex;
  align-items: center;
  padding: 0 12px 0 3px;
  gap: 8px;
  border-bottom: 1px solid #b5c9ce;
  background: linear-gradient(90deg, #f2f3f9, #ecf6f8 30%, #ebf6f8 75%, #f1f2f8 92%);
  font-size: 13px;
}
.navbuttons { width: 190px; display: flex; }
.navbuttons .plain { width: 48px; }
.navbuttons path { fill: none; stroke: #333; stroke-width: 1.2; }
.address, .search {
  height: 32px;
  border-radius: 4px;
  background: #fafcfe;
  display: flex;
  align-items: center;
}
.address { flex: 1; gap: 18px; padding-left: 13px; }
.crumb { width: 8px; height: 12px; color: #333; }
.search { width: 494px; padding: 0 13px 0 15px; }
.search input { flex: 1; min-width: 0; border: 0; padding: 0; background: none; outline: 0; }
.search input::placeholder { color: #666; opacity: 1; }

/* Commands */
.toolbar {
  height: 47px;
  display: flex;
  align-items: center;
  padding: 2px 23px 0 17px;
  border-bottom: 1px solid #b5c9ce;
}
.tool {
  border: 0;
  padding: 0;
  background: none;
  display: flex;
  align-items: center;
  gap: 8px;
  color: #222;
}
.drop { width: 8px; height: 6px; color: #999; }
.new { width: 98px; }
.tools {
  display: flex;
  height: 32px;
  padding: 0 3px;
  margin-right: 14px;
  border: 1px solid #e8eaec;
  border-width: 0 1px;
}
.tools .plain { width: 48px; }
.tools svg { fill: none; stroke: #a6cdea; }
.view { margin-left: 27px; padding-right: 15px; height: 32px; border-right: 1px solid #e8eaec; }
.more { width: 49px; }
.details { margin-left: auto; }

/* Folder tree */
.content { flex: 1; min-height: 0; display: flex; }
.tree {
  width: 159px;
  padding: 6px 2px 0;
  border-right: 1px solid #eef0f2;
}
.tree a {
  height: 32px;
  padding-left: 8px;
  display: flex;
  align-items: center;
  gap: 5px;
  overflow: hidden;
  border-radius: 2px;
}
.tree .l1 { padding-left: 16px; }
.tree .l2 { padding-left: 24px; }
.tree .selected { background: #d9d9d9; }
.chev { width: 12px; height: 12px; margin-right: 7px; flex: none; color: #808080; }
.open .chev { color: #222; }

/* File table */
.files { flex: 1; min-width: 0; position: relative; }
table { width: 616px; table-layout: fixed; border-collapse: collapse; }
.c-name { width: 272px; }
.c-date { width: 144px; }
.c-type { width: 120px; }
.c-size { width: 80px; }
th {
  height: 26px;
  padding: 0 6px;
  text-align: left;
  font-weight: 400;
  color: #4c607a;
  border-right: 1px solid #e2e5e8;
}
th:first-child { padding-left: 31px; position: relative; }
.sort { position: absolute; left: 142px; top: 0; width: 12px; height: 6px; }
tbody::before { content: ""; display: block; height: 4px; }
td { height: 28px; padding: 0 7px; color: #6d6d6d; }
td:first-child { padding-left: 19px; color: #000; }
td svg { display: inline-block; vertical-align: -3px; margin-right: 4px; }
td:last-child { text-align: right; }
.marker { position: absolute; left: 5px; top: 470px; width: 304px; height: 44px; }

/* Status bar */
.status {
  height: 24px;
  padding: 0 5px 0 14px;
  display: flex;
  align-items: center;
  color: #1e395b;
}
.modes { margin-left: auto; display: flex; }
.modes .plain { width: 24px; height: 24px; }
.modes .on { background: #d5effc; border: 1px solid #1b7fc4; }

/* Strip of the window underneath */
.behind { height: 8px; padding-left: 27%; overflow: hidden; }

/* Taskbar */
.taskbar {
  height: 41px;
  display: flex;
  align-items: flex-start;
  padding: 0 18px 0 10px;
  border-top: 1px solid #b9c3cf;
  background: linear-gradient(90deg, #dadae8, #d4e0ea 10%, #cde4ea 20%, #d6dce9 31%, #e3d5e0 48%, #d8dbe7 58%, #d6dce8 66%, #e0e0e4 72%, #cde5ea 79%, #cfe2ea 90%, #d7dae8);
}
.taskbar .plain { height: 47px; }
.start { width: 44px; }
.tasksearch {
  width: 218px;
  height: 30px;
  margin: 8px 3px 0 4px;
  padding: 0 2px 0 11px;
  display: flex;
  align-items: center;
  gap: 9px;
  border-radius: 15px;
  background: #f3f6fa;
  box-shadow: 0 0 1px 1px #d2d8e0;
  font-size: 13px;
}
.tasksearch input { flex: 1; min-width: 0; border: 0; padding: 0; background: none; outline: 0; }
.tasksearch input::placeholder { color: #5c5c5c; opacity: 1; }
.rocks { width: 48px; height: 24px; }
.apps { display: flex; }
.app { width: 44px; position: relative; }
.app.active::before {
  content: "";
  position: absolute;
  inset: 4px 4px 0;
  border-radius: 4px;
  background: #eaf3f8;
}
.app svg { position: relative; }
.app.active::after, .app.run::after {
  content: "";
  position: absolute;
  top: 39px;
  width: 6px;
  height: 3px;
  border-radius: 2px;
  background: #7c8086;
}
.app.active::after { width: 16px; background: #0a72cc; }
.tray { margin-left: auto; display: flex; color: #222; }
.tray .plain { width: 32px; }
.tray .lang { width: 46px; }
.tray .lang + .plain { width: 24px; }
.tray .lang + .plain + .plain { width: 24px; }
.tray .clock { width: auto; margin-left: 13px; flex-direction: column; align-items: flex-end; }
```
